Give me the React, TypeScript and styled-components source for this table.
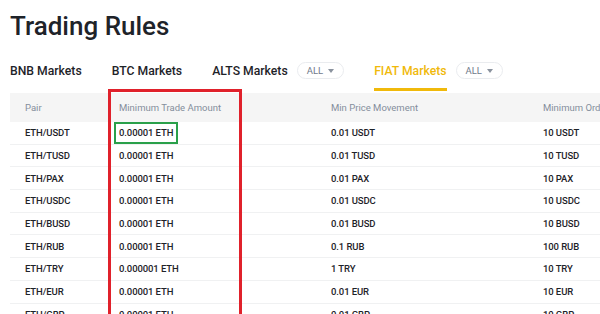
import React from 'react';
import styled, { createGlobalStyle } from 'styled-components';

const GlobalStyle = createGlobalStyle`
  html, body {
    margin: 0;
    padding: 0;
    background: #fff;
    font-family: Roboto, "Noto Sans", sans-serif;
    color: #1e2329;
  }
`;

const Page = styled.div`
  width: 600px;
  height: 314px;
  overflow: hidden;
  padding-left: 10px;
  box-sizing: border-box;
`;

const Title = styled.h1`
  margin: 0;
  padding-top: 9px;
  font-size: 26px;
  line-height: 34px;
  font-weight: 500;
`;

const Tabs = styled.div`
  display: flex;
  align-items: center;
  gap: 30px;
  margin-top: 7px;
  height: 41px;
`;

const TabGroup = styled.div`
  display: flex;
  align-items: center;
  gap: 9px;
  height: 100%;
`;

const Tab = styled.div<{ $active?: boolean }>`
  position: relative;
  height: 100%;
  display: flex;
  align-items: center;
  font-size: 12.2px;
  font-weight: 500;
  color: ${({ $active }) => ($active ? '#f0b90b' : '#1e2329')};
  &::after {
    content: '';
    position: absolute;
    left: 0;
    right: 0;
    bottom: 0;
    height: 3px;
    background: ${({ $active }) => ($active ? '#f0b90b' : 'transparent')};
  }
`;

const Pill = styled.div`
  display: flex;
  align-items: center;
  gap: 5px;
  height: 17px;
  padding: 0 9px;
  border: 1px solid #eaecef;
  border-radius: 10px;
  font-size: 9.5px;
  color: #707a8a;
  box-sizing: border-box;
`;

const Caret = styled.span`
  width: 0;
  height: 0;
  border-left: 3.5px solid transparent;
  border-right: 3.5px solid transparent;
  border-top: 4px solid #8a929e;
`;

const Table = styled.div`
  position: relative;
  margin-top: 2px;
`;

const Row = styled.div<{ $head?: boolean }>`
  display: grid;
  grid-template-columns: 94px 212px 212px 1fr;
  align-items: center;
  height: ${({ $head }) => ($head ? '29px' : '22.7px')};
  background: ${({ $head }) => ($head ? '#f5f5f5' : '#fff')};
  border-bottom: ${({ $head }) => ($head ? 'none' : '1px solid #f0f1f2')};
  box-sizing: border-box;
`;

const Cell = styled.div<{ $head?: boolean }>`
  padding-left: 15px;
  white-space: nowrap;
  overflow: hidden;
  font-size: 9.5px;
  letter-spacing: ${({ $head }) => ($head ? '0' : '-0.1px')};
  font-weight: ${({ $head }) => ($head ? 400 : 500)};
  color: ${({ $head }) => ($head ? '#848e9c' : '#1e2329')};
`;

const RedBox = styled.div`
  position: absolute;
  left: 98px;
  top: -4px;
  width: 134px;
  height: 260px;
  border: 3px solid #e0212b;
  box-sizing: border-box;
  pointer-events: none;
`;

const GreenBox = styled.div`
  position: absolute;
  left: 104px;
  top: 29px;
  width: 64px;
  height: 22px;
  border: 2.5px solid #2aa04a;
  box-sizing: border-box;
  pointer-events: none;
`;

const rows = [
  ['ETH/USDT', '0.00001 ETH', '0.01 USDT', '10 USDT'],
  ['ETH/TUSD', '0.00001 ETH', '0.01 TUSD', '10 TUSD'],
  ['ETH/PAX', '0.00001 ETH', '0.01 PAX', '10 PAX'],
  ['ETH/USDC', '0.00001 ETH', '0.01 USDC', '10 USDC'],
  ['ETH/BUSD', '0.00001 ETH', '0.01 BUSD', '10 BUSD'],
  ['ETH/RUB', '0.00001 ETH', '0.1 RUB', '100 RUB'],
  ['ETH/TRY', '0.000001 ETH', '1 TRY', '10 TRY'],
  ['ETH/EUR', '0.00001 ETH', '0.01 EUR', '10 EUR'],
  ['ETH/GBP', '0.00001 ETH', '0.01 GBP', '10 GBP'],
];

export default function App() {
  return (
    <>
      <GlobalStyle />
      <Page>
        <Title>Trading Rules</Title>
        <Tabs>
          <Tab>BNB Markets</Tab>
          <Tab>BTC Markets</Tab>
          <TabGroup>
            <Tab>ALTS Markets</Tab>
            <Pill>ALL<Caret /></Pill>
          </TabGroup>
          <TabGroup>
            <Tab $active>FIAT Markets</Tab>
            <Pill>ALL<Caret /></Pill>
          </TabGroup>
        </Tabs>
        <Table>
          <Row $head>
            <Cell $head>Pair</Cell>
            <Cell $head>Minimum Trade Amount</Cell>
            <Cell $head>Min Price Movement</Cell>
            <Cell $head>Minimum Order Size</Cell>
          </Row>
          {rows.map((r) => (
            <Row key={r[0]}>
              {r.map((c, i) => (
                <Cell key={i}>{c}</Cell>
              ))}
            </Row>
          ))}
          <RedBox />
          <GreenBox />
        </Table>
      </Page>
    </>
  );
}
